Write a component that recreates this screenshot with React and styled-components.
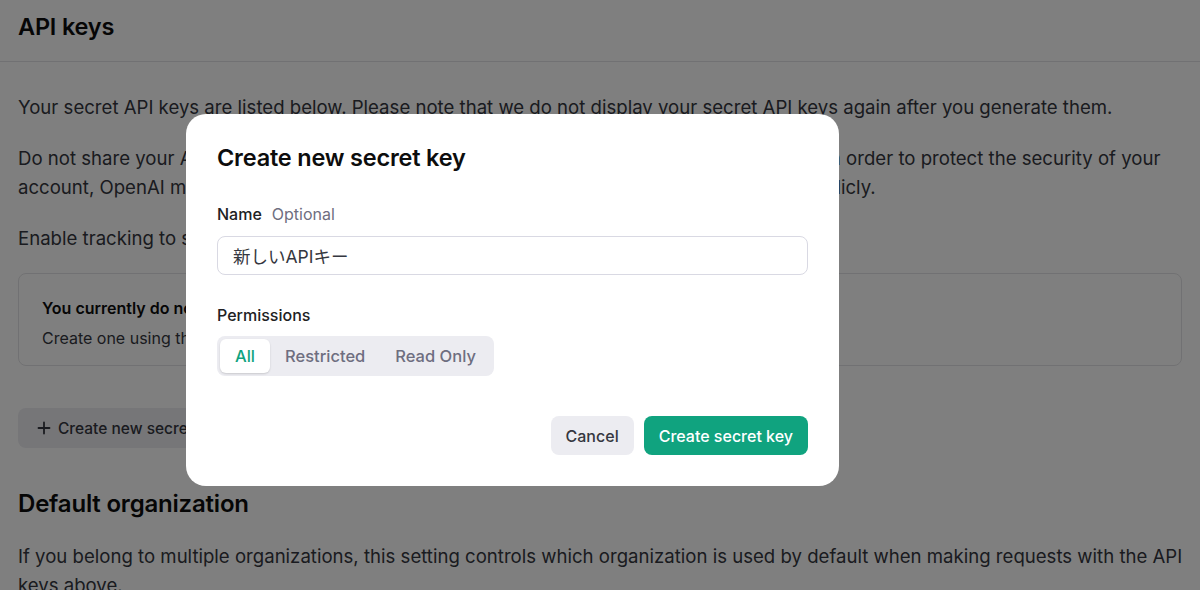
import React from "react";
import styled, { createGlobalStyle } from "styled-components";

const Global = createGlobalStyle`
  html, body { margin: 0; padding: 0; background: #fff; }
  body { font-family: Inter, "Noto Sans CJK JP", sans-serif; color: #0d0d0d; overflow: hidden; }
  * { box-sizing: border-box; }
`;

const Page = styled.div`
  width: 1200px;
  height: 590px;
  overflow: hidden;
  position: relative;
`;

const Header = styled.header`
  height: 62px;
  padding: 0 18px 8px;
  display: flex;
  align-items: center;
  border-bottom: 1px solid #e3e3e6;
`;

const Title = styled.h1`
  margin: 0;
  font-size: 23.5px;
  font-weight: 600;
  letter-spacing: -0.2px;
`;

const Content = styled.main`
  padding: 31px 6px 0 18px;
  display: flex;
  flex-direction: column;
`;

const Para = styled.p`
  margin: 0 0 22px;
  font-size: 18.6px;
  line-height: 29px;
  color: #353740;
`;

const EmptyBox = styled.div`
  border: 1px solid #e3e3e6;
  border-radius: 8px;
  margin-right: 12px;
  padding: 22px 23px 15px;
  display: flex;
  flex-direction: column;
  gap: 6px;
  margin-top: -2px;
`;

const BoxTitle = styled.div`
  font-size: 16px;
  font-weight: 600;
  line-height: 24px;
`;

const BoxText = styled.div`
  font-size: 16px;
  line-height: 24px;
  color: #353740;
`;

const GhostButton = styled.button`
  align-self: flex-start;
  margin-top: 42px;
  height: 40px;
  padding: 0 18px;
  border: none;
  border-radius: 8px;
  background: #ececf1;
  font: 500 15.5px Inter, sans-serif;
  color: #353740;
  display: flex;
  align-items: center;
  gap: 6px;
`;

const SectionTitle = styled.h2`
  margin: 40px 0 22px;
  font-size: 24px;
  font-weight: 600;
  line-height: 32px;
  letter-spacing: -0.2px;
`;

const Overlay = styled.div`
  position: fixed;
  inset: 0;
  background: rgba(0, 0, 0, 0.5);
  display: flex;
  align-items: flex-start;
  padding: 114px 0 0 186px;
`;

const Modal = styled.div`
  width: 653px;
  height: 372px;
  background: #fff;
  border-radius: 20px;
  padding: 29px 31px 31px;
  display: flex;
  flex-direction: column;
`;

const ModalTitle = styled.h2`
  margin: 0;
  font-size: 23.5px;
  font-weight: 600;
  line-height: 30px;
  letter-spacing: -0.2px;
`;

const Label = styled.div`
  margin-top: ${(p) => p.$top}px;
  font-size: 16px;
  font-weight: 500;
  line-height: 20px;
  color: #202123;
  display: flex;
  gap: 10px;
`;

const Hint = styled.span`
  color: #6e6e80;
  font-weight: 400;
`;

const Input = styled.input`
  margin-top: 12px;
  height: 39px;
  width: 100%;
  border: 1px solid #d9d9e3;
  border-radius: 8px;
  padding: 0 15px;
  font: 400 17.5px Inter, "Noto Sans CJK JP", sans-serif;
  color: #353740;
  outline: none;
`;

const Segmented = styled.div`
  margin-top: 11px;
  align-self: flex-start;
  display: flex;
  padding: 3px;
  height: 40px;
  border-radius: 8px;
  background: #ececf1;
`;

const Seg = styled.button`
  border: none;
  border-radius: 6px;
  padding: 0 15px;
  height: 34px;
  font: 500 16.5px Inter, sans-serif;
  background: ${(p) => (p.$active ? "#fff" : "transparent")};
  color: ${(p) => (p.$active ? "#10a37f" : "#6e6e80")};
  box-shadow: ${(p) => (p.$active ? "0 1px 2px rgba(0,0,0,0.15)" : "none")};
`;

const Footer = styled.div`
  margin-top: auto;
  display: flex;
  justify-content: flex-end;
  gap: 10px;
`;

const Btn = styled.button`
  height: 39px;
  border: none;
  border-radius: 8px;
  padding: 0 15px;
  font: 500 16px Inter, sans-serif;
  background: ${(p) => (p.$primary ? "#10a37f" : "#ececf1")};
  color: ${(p) => (p.$primary ? "#fff" : "#353740")};
`;

export default function App() {
  return (
    <>
      <Global />
      <Page>
        <Header>
          <Title>API keys</Title>
        </Header>
        <Content>
          <Para>
            Your secret API keys are listed below. Please note that we do not display your secret API keys again after you generate them.
          </Para>
          <Para>
            Do not share your API key with others, or expose it in the browser or other client-side code. In order to protect the security of your account, OpenAI may also automatically disable any API key that we've found has leaked publicly.
          </Para>
          <Para>Enable tracking to see usage per API key on the Usage page.</Para>
          <EmptyBox>
            <BoxTitle>You currently do not have any API keys</BoxTitle>
            <BoxText>Create one using the button below to get started</BoxText>
          </EmptyBox>
          <GhostButton>
            <svg width="16" height="16" viewBox="0 0 16 16" fill="none" stroke="currentColor" strokeWidth="1.8" strokeLinecap="round">
              <path d="M8 2.5v11M2.5 8h11" />
            </svg>
            Create new secret key
          </GhostButton>
          <SectionTitle>Default organization</SectionTitle>
          <Para>
            If you belong to multiple organizations, this setting controls which organization is used by default when making requests with the API keys above.
          </Para>
        </Content>
        <Overlay>
          <Modal>
            <ModalTitle>Create new secret key</ModalTitle>
            <Label $top={31}>
              Name <Hint>Optional</Hint>
            </Label>
            <Input defaultValue="新しいAPIキー" />
            <Label $top={30}>Permissions</Label>
            <Segmented>
              <Seg $active>All</Seg>
              <Seg>Restricted</Seg>
              <Seg>Read Only</Seg>
            </Segmented>
            <Footer>
              <Btn>Cancel</Btn>
              <Btn $primary>Create secret key</Btn>
            </Footer>
          </Modal>
        </Overlay>
      </Page>
    </>
  );
}
